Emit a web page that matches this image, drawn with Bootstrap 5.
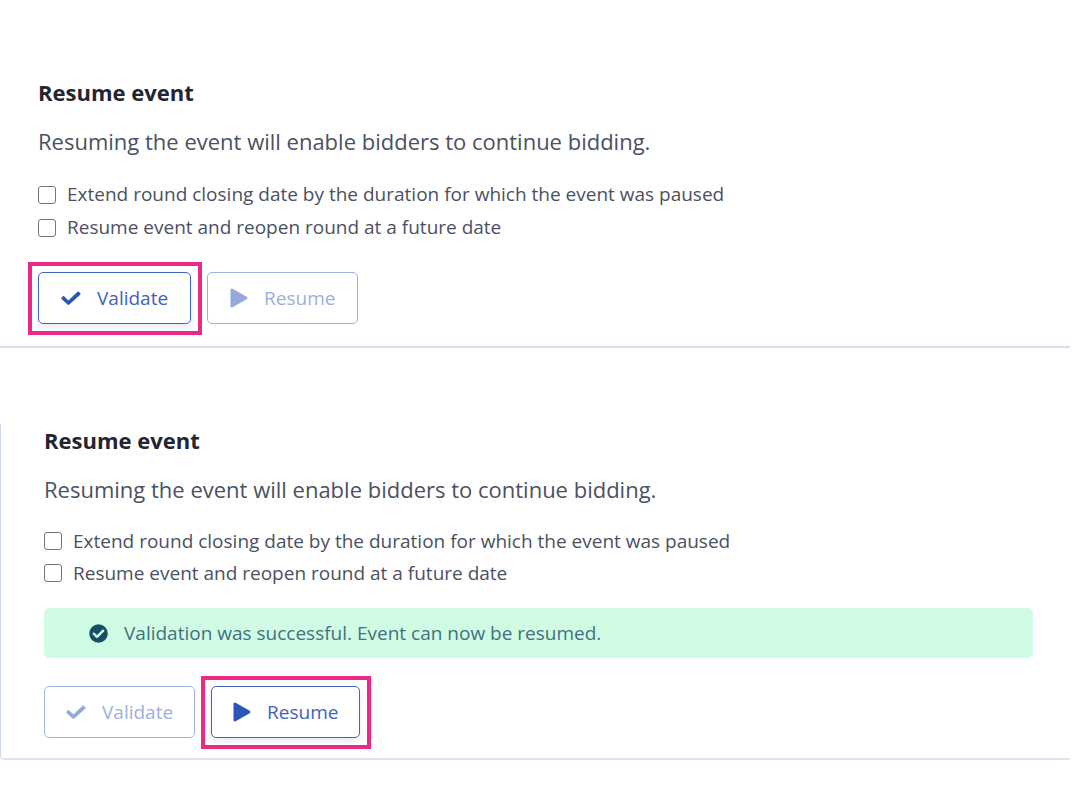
<!DOCTYPE html>
<html lang="en">
<head>
<meta charset="utf-8">
<meta name="viewport" content="width=device-width, initial-scale=1">
<title>Resume event</title>
<link href="https://cdn.jsdelivr.net/npm/bootstrap@5.3.0/dist/css/bootstrap.min.css" rel="stylesheet">
<style>
  body { font-family: "Open Sans", sans-serif; font-size: 19px; line-height: 32px; color: #4b5162; background: #fff; }
  .event-panel { margin-right: 10px; padding-right: 37px; }
  .panel-plain { padding-top: 79px; padding-left: 38px; padding-bottom: 22px; line-height: 33px; border-bottom: 2px solid #d5dff0; }
  .panel-boxed { margin-top: 76px; padding-top: 3px; padding-left: 43px; padding-bottom: 20px; border-left: 1px solid #ccd7ee; border-bottom: 2px solid #dbe4f3; border-bottom-left-radius: 5px; box-shadow: 0 4px 0 #eef3fc; }
  .event-title { font-size: 22px; line-height: 26px; font-weight: 700; color: #23262f; margin-bottom: 20px; }
  .event-text { font-size: 22px; margin-bottom: 20px; }
  .option { gap: 11px; }
  .option .form-check-input { width: 18px; height: 18px; margin: 0; border: 1px solid #767676; border-radius: 3px; }
  .actions { gap: 16px; margin-top: 28px; }
  .btn-event { --bs-btn-color: #4360bd; --bs-btn-border-color: #3f66bf; --bs-btn-bg: #fff; --bs-btn-hover-color: #2a55b9; --bs-btn-hover-border-color: #2a55b9;
    --bs-btn-disabled-color: #4360bd; --bs-btn-disabled-border-color: #3f66bf; --bs-btn-disabled-bg: #fff; --bs-btn-disabled-opacity: .5;
    --bs-btn-font-size: 19px; --bs-btn-padding-x: 22px; --bs-btn-padding-y: 0px; --bs-btn-border-width: 1px; --bs-btn-border-radius: 5px; height: 52px; gap: 16px; }
  .panel-boxed .btn-event { --bs-btn-padding-x: 21px; }
  .btn-event:not(:disabled) { box-shadow: 0 4px 8px rgba(60, 90, 190, .12); }
  .btn-event svg { fill: #2a55b9; }
  .spotlight::after { content: ""; position: absolute; inset: -10px -11px -11px -10px; border: 4px solid #ea2a86; pointer-events: none; }
  .notice { --bs-alert-bg: #d0fce4; --bs-alert-color: #43717e; --bs-alert-border-color: #d0fce4; --bs-alert-border-radius: 5px; --bs-alert-padding-x: 44px; --bs-alert-padding-y: 8px; gap: 16px; margin: 19px 0 0; }
</style>
</head>
<body>
<main>
  <section class="event-panel panel-plain">
    <h2 class="event-title">Resume event</h2>
    <p class="event-text">Resuming the event will enable bidders to continue bidding.</p>
    <div class="option d-flex align-items-center">
      <input class="form-check-input" type="checkbox" id="extend1">
      <label for="extend1">Extend round closing date by the duration for which the event was paused</label>
    </div>
    <div class="option d-flex align-items-center">
      <input class="form-check-input" type="checkbox" id="future1">
      <label for="future1">Resume event and reopen round at a future date</label>
    </div>
    <div class="actions d-flex">
      <div class="spotlight position-relative">
        <button type="button" class="btn btn-event d-flex align-items-center">
          <svg width="20" height="20" viewBox="0 0 20 20" aria-hidden="true"><path d="M1.300 8.700a1.600 1.600 0 0 1 2.300 0l3.800 3.700 8.600-8.200a1.600 1.600 0 0 1 2.300 0l.6.600a1.600 1.600 0 0 1 0 2.300L8.600 16.300a1.600 1.600 0 0 1-2.300 0L.8 11.200a1.600 1.600 0 0 1 0-2.000z"/></svg>
          Validate
        </button>
      </div>
      <button type="button" class="btn btn-event d-flex align-items-center" disabled>
        <svg width="18" height="20" viewBox="0 0 18 20" aria-hidden="true"><path d="M.5 2.200Q.5 0 2.600.7L16.700 8.700Q18.200 10 16.700 11.200L2.600 19.300Q.5 20 .5 17.800Z"/></svg>
        Resume
      </button>
    </div>
  </section>

  <section class="event-panel panel-boxed">
    <h2 class="event-title">Resume event</h2>
    <p class="event-text">Resuming the event will enable bidders to continue bidding.</p>
    <div class="option d-flex align-items-center">
      <input class="form-check-input" type="checkbox" id="extend2">
      <label for="extend2">Extend round closing date by the duration for which the event was paused</label>
    </div>
    <div class="option d-flex align-items-center">
      <input class="form-check-input" type="checkbox" id="future2">
      <label for="future2">Resume event and reopen round at a future date</label>
    </div>
    <div class="notice alert d-flex align-items-center" role="alert">
      <svg width="19" height="19" viewBox="0 0 19 19" aria-hidden="true"><circle cx="9.500" cy="9.500" r="9.300" fill="#174f68"/><path d="M4.800 9.700 8 12.800 14.200 6.700" fill="none" stroke="#d0fce4" stroke-width="2.400" stroke-linecap="round" stroke-linejoin="round"/></svg>
      <span>Validation was successful. Event can now be resumed.</span>
    </div>
    <div class="actions d-flex">
      <button type="button" class="btn btn-event d-flex align-items-center" disabled>
        <svg width="20" height="20" viewBox="0 0 20 20" aria-hidden="true"><path d="M1.300 8.700a1.600 1.600 0 0 1 2.300 0l3.800 3.700 8.600-8.200a1.600 1.600 0 0 1 2.300 0l.6.600a1.600 1.600 0 0 1 0 2.300L8.600 16.300a1.600 1.600 0 0 1-2.300 0L.8 11.200a1.600 1.600 0 0 1 0-2.000z"/></svg>
        Validate
      </button>
      <div class="spotlight position-relative">
        <button type="button" class="btn btn-event d-flex align-items-center">
          <svg width="18" height="20" viewBox="0 0 18 20" aria-hidden="true"><path d="M.5 2.200Q.5 0 2.600.7L16.700 8.700Q18.200 10 16.700 11.200L2.600 19.300Q.5 20 .5 17.800Z"/></svg>
          Resume
        </button>
      </div>
    </div>
  </section>
</main>
<script src="https://cdn.jsdelivr.net/npm/bootstrap@5.3.0/dist/js/bootstrap.bundle.min.js"></script>
</body>
</html>
